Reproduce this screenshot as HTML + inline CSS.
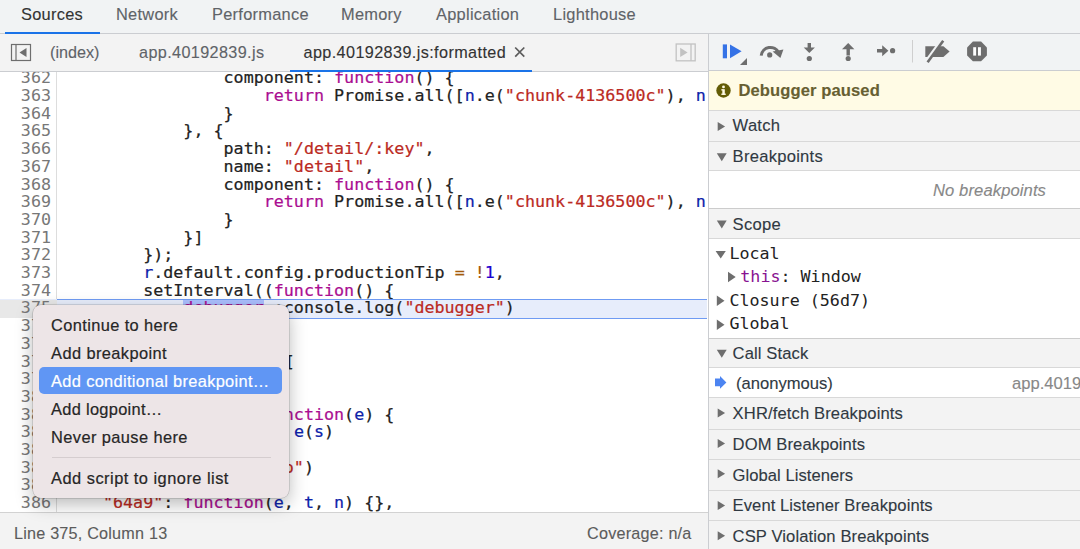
<!DOCTYPE html>
<html lang="en">
<head>
<meta charset="utf-8">
<title>DevTools - Sources</title>
<style>
*{box-sizing:border-box;margin:0;padding:0}
html,body{width:1080px;height:549px;overflow:hidden;background:#fff}
body{position:relative;font-family:"Liberation Sans",Arial,sans-serif;color:#333;font-size:16px;-webkit-font-smoothing:antialiased}
.abs{position:absolute}
#tabs span,#ftabs span,.row>span,#status span{-webkit-text-stroke:.12px}
/* top tab bar */
#tabs{left:0;top:0;width:1080px;height:34px;background:#f1f3f4;border-bottom:1px solid #cbcdd1}
#tabs span{position:absolute;top:4px;letter-spacing:.27px;font-size:16.4px;line-height:20px;color:#5f6368;white-space:nowrap}
#tabs span.sel{color:#333}
#tabs i{position:absolute;left:5px;top:32px;width:95px;height:2px;background:#1a73e8}
/* file tab bar */
#ftabs{left:0;top:34px;width:708px;height:38px;background:#f3f3f3;border-bottom:1px solid #cbcdd1}
#ftabs span{position:absolute;top:8px;font-size:16.2px;line-height:20px;color:#5f6368;white-space:nowrap}
#ftabs span.sel{color:#333}
#ftabs i{position:absolute;left:290px;top:35.5px;width:242px;height:2px;background:#1a73e8}
/* code */
#code{z-index:0;left:0;top:72px;width:708px;height:440px;overflow:hidden;background:#fff}
#gutter{left:0;top:0;width:57px;height:441px;border-right:1px solid #ddd;background:#fff}
.ln{position:absolute;left:0;width:706.5px;height:17.7px;font-family:"DejaVu Sans Mono","Liberation Mono",monospace;font-size:16.7px;line-height:17.7px;white-space:pre;color:#222}
.ln b{position:absolute;left:0;top:0;width:51px;text-align:right;font-weight:normal;color:#777}
.ln s{position:absolute;left:62.8px;top:0;text-decoration:none;-webkit-text-stroke:.22px}
.p{color:#881391}.ln.ex{background:#e7edfb;height:18.2px}
.ln.ex s{overflow:hidden;height:17.7px}
.ln.ex:before{content:"";z-index:2;position:absolute;left:57px;right:0;top:-.5px;height:1.3px;background:#6f9bf3}
.ln.ex:after{content:"";z-index:2;position:absolute;left:57px;right:0;bottom:-1.2px;height:1.3px;background:#6f9bf3}
.ln.ex b{width:57px;padding-right:6px}
.ln.ex i{position:absolute;left:0;top:.8px;width:57px;height:17.8px;background:#e8e8e8}
.tok{background:#abbffe}
.k{color:#aa0d91}.st{color:#bb2a23}.d{color:#0d22aa}.n{color:#1c00cf}.o{color:#a3590b}
/* status */
#status{left:0;top:512px;width:708px;height:37px;background:#f3f3f3;border-top:1px solid #d2d2d2;font-size:16.2px;color:#5c5c5c}
#status span{position:absolute;top:10px;line-height:20px;white-space:nowrap}
/* right */
#right{left:708px;top:34px;width:372px;height:515px;border-left:1px solid #cbcdd1;background:#fff}
#dbgbar{left:0;top:0;width:371px;height:36.5px;background:#f1f3f4;border-bottom:1px solid #cbcdd1}
.row{position:absolute;left:0;width:371px;background:#f3f3f3;border-bottom:1px solid #d8d8d8;font-size:16.6px;letter-spacing:.25px;color:#303942;white-space:nowrap}
.row>span{position:absolute;left:23.6px;line-height:20px}
.tri{position:absolute;width:0;height:0}
.tri.r{border-left:7.4px solid #6e6e6e;border-top:4.6px solid transparent;border-bottom:4.6px solid transparent;margin-top:-.3px}
.tri.r2{border-left:7.7px solid #6e6e6e;border-top:5.3px solid transparent;border-bottom:5.3px solid transparent}
.tri.dn{border-top:8px solid #6e6e6e;border-left:5px solid transparent;border-right:5px solid transparent}
.mono{font-family:"DejaVu Sans Mono","Liberation Mono",monospace;font-size:16.7px;color:#222;white-space:pre;position:absolute;line-height:20px}
/* menu */
#menu{z-index:10;left:32.5px;top:305px;width:256.5px;height:193px;background:#ede5e7;border-radius:8px;box-shadow:0 0 0 0.5px rgba(0,0,0,.22),0 6px 18px rgba(0,0,0,.28);font-size:16.4px;color:#262626}
#menu span{position:absolute;left:18.6px;line-height:20px;white-space:nowrap;-webkit-text-stroke:.2px}
#menu .hl{position:absolute;left:6.7px;top:61.6px;width:242.6px;height:27.4px;border-radius:5px;background:#6096f4}
#menu .sep{position:absolute;left:19px;top:152px;width:219px;height:1px;background:#d5cdcf}
</style>
</head>
<body>
<!-- top tabs -->
<div id="tabs" class="abs">
<span class="sel" style="left:21px">Sources</span>
<span style="left:116px">Network</span>
<span style="left:212px">Performance</span>
<span style="left:341px">Memory</span>
<span style="left:436px">Application</span>
<span style="left:553px">Lighthouse</span>
<i></i>
</div>
<!-- file tabs -->
<div id="ftabs" class="abs">
<svg class="abs" style="left:10px;top:9px" width="22" height="19" viewBox="0 0 22 19"><rect x="1.5" y="1.5" width="19" height="16" fill="none" stroke="#6e6e6e" stroke-width="1.2"/><line x1="6" y1="1.5" x2="6" y2="17.5" stroke="#6e6e6e" stroke-width="1.2"/><path d="M16.5 5 L16.5 14 L9.5 9.5 Z" fill="#6e6e6e"/></svg>
<span style="left:50px">(index)</span>
<span style="left:139px;letter-spacing:.38px">app.40192839.js</span>
<span class="sel" style="left:303.5px;letter-spacing:.4px">app.40192839.js:formatted</span>
<svg class="abs" style="left:513px;top:11px" width="14" height="14" viewBox="513 45 14 14" aria-label="×"><title>×</title><path d="M515.2 47.5 L524.3 56.7 M524.3 47.5 L515.2 56.7" stroke="#5c5c5c" stroke-width="1.7" fill="none"/></svg>
<svg class="abs" style="left:675px;top:9px" width="22" height="19" viewBox="0 0 22 19"><rect x="1.2" y="1" width="19" height="16.8" fill="none" stroke="#c2c2c2" stroke-width="1.3"/><line x1="16" y1="1" x2="16" y2="17.8" stroke="#c2c2c2" stroke-width="1.3"/><path d="M5.2 4.7 L5.2 14.1 L12.6 9.4 Z" fill="#c2c2c2"/></svg>
<i></i>
</div>
<!-- code -->
<div id="code" class="abs">
<div id="gutter" class="abs"></div>
<div id="lines" class="abs" style="left:0;top:-0.1px;width:708px;height:0">
<div class="ln" style="top:-2.55px"><b>362</b><s>                component: <span class="k">function</span>() {</s></div>
<div class="ln" style="top:15.15px"><b>363</b><s>                    <span class="k">return</span> Promise.all([<span class="d">n</span>.e(<span class="st">"chunk-4136500c"</span>), <span class="d">n</span>.e(<span class="st">"chunk-7f2a1b3e"</span>)])</s></div>
<div class="ln" style="top:32.85px"><b>364</b><s>                }</s></div>
<div class="ln" style="top:50.55px"><b>365</b><s>            }, {</s></div>
<div class="ln" style="top:68.25px"><b>366</b><s>                path: <span class="st">"/detail/:key"</span>,</s></div>
<div class="ln" style="top:85.95px"><b>367</b><s>                name: <span class="st">"detail"</span>,</s></div>
<div class="ln" style="top:103.65px"><b>368</b><s>                component: <span class="k">function</span>() {</s></div>
<div class="ln" style="top:121.35px"><b>369</b><s>                    <span class="k">return</span> Promise.all([<span class="d">n</span>.e(<span class="st">"chunk-4136500c"</span>), <span class="d">n</span>.e(<span class="st">"chunk-2d0c4a8f"</span>)])</s></div>
<div class="ln" style="top:139.05px"><b>370</b><s>                }</s></div>
<div class="ln" style="top:156.75px"><b>371</b><s>            }]</s></div>
<div class="ln" style="top:174.45px"><b>372</b><s>        });</s></div>
<div class="ln" style="top:192.15px"><b>373</b><s>        <span class="d">r</span>.default.config.productionTip <span class="o">=</span> <span class="o">!</span><span class="n">1</span>,</s></div>
<div class="ln" style="top:209.85px"><b>374</b><s>        setInterval((<span class="k">function</span>() {</s></div>
<div class="ln ex" style="top:227.55px"><i></i><b>375</b><s>            <span class="tok"><span class="k">debugger</span></span> ;console.log(<span class="st">"debugger"</span>)</s></div>
<div class="ln" style="top:245.25px"><b>376</b><s>        }), <span class="n">1e3</span>)</s></div>
<div class="ln" style="top:262.95px"><b>377</b><s>    },</s></div>
<div class="ln" style="top:280.65px"><b>378</b><s style="left:63.8px">            children: [</s></div>
<div class="ln" style="top:298.35px"><b>379</b><s>        <span class="d">e</span>.exports</s></div>
<div class="ln" style="top:316.05px"><b>380</b><s>    },</s></div>
<div class="ln" style="top:333.75px"><b>381</b><s>            change: <span class="k">function</span>(<span class="d">e</span>) {</s></div>
<div class="ln" style="top:351.45px"><b>382</b><s>                <span class="k">return</span> <span class="d">e</span>(<span class="d">s</span>)</s></div>
<div class="ln" style="top:369.15px"><b>383</b><s>            }</s></div>
<div class="ln" style="top:386.85px"><b>384</b><s>            }, <span class="st">"baz-foo"</span>)</s></div>
<div class="ln" style="top:404.55px"><b>385</b><s>    },</s></div>
<div class="ln" style="top:422.25px"><b>386</b><s>    <span class="st">"64a9"</span>: <span class="k">function</span>(<span class="d">e</span>, <span class="d">t</span>, <span class="d">n</span>) {},</s></div>
</div>
</div>
<!-- status -->
<div id="status" class="abs"><span style="left:14px;letter-spacing:.21px">Line 375, Column 13</span><span style="left:587px;letter-spacing:.22px">Coverage: n/a</span></div>
<!-- right -->
<div id="right" class="abs">
<div id="dbgbar" class="abs">
<svg class="abs" style="left:0;top:0" width="371" height="36" viewBox="709 34 371 36">
<!-- resume -->
<rect x="722.8" y="44.4" width="4.2" height="13.9" fill="#3572e6"/>
<path d="M730 44.4 L741.6 51.35 L730 58.3 Z" fill="#3572e6"/>
<path d="M747 58 L747 65 L740 65 Z" fill="#6e6e6e"/>
<!-- step over -->
<path d="M761.2 55.6 A9.2 9.2 0 0 1 778.6 52.6" fill="none" stroke="#6e6e6e" stroke-width="3"/>
<path d="M772.6 51.6 L783.4 49.4 L780.4 58 Z" fill="#6e6e6e"/>
<circle cx="769.7" cy="54.9" r="2.6" fill="#6e6e6e"/>
<!-- step into -->
<path d="M807.6 43 H811 V47.4 H814.9 L809.3 52.9 L803.7 47.4 H807.6 Z" fill="#6e6e6e"/>
<circle cx="809.3" cy="58.5" r="2.6" fill="#6e6e6e"/>
<!-- step out -->
<path d="M848.2 43 L854.4 49.3 H849.9 V55.6 H846.5 V49.3 H842 Z" fill="#6e6e6e"/>
<circle cx="848.2" cy="58.5" r="2.6" fill="#6e6e6e"/>
<!-- step -->
<path d="M877 48.9 H882.2 V45.2 L888.4 50.7 L882.2 56.2 V52.5 H877 Z" fill="#6e6e6e"/>
<circle cx="892.6" cy="50.7" r="2.6" fill="#6e6e6e"/>
<!-- divider -->
<rect x="912" y="40" width="1" height="22.5" fill="#cfcfcf"/>
<!-- deactivate breakpoints -->
<path d="M925.3 46.2 H943.4 L949.6 51.55 L943.4 56.9 H925.3 Z" fill="#6e6e6e"/>
<path d="M925.6 62.3 L941.2 40.8" stroke="#f1f3f4" stroke-width="3.4" fill="none"/>
<path d="M927.6 62.3 L943.2 40.8" stroke="#6e6e6e" stroke-width="2.6" fill="none"/>
<!-- pause on exceptions -->
<path d="M972.9 41.6 H981.1 L986.9 47.4 V55.4 L981.1 61.2 H972.9 L967.1 55.4 V47.4 Z" fill="#6e6e6e"/>
<rect x="973.2" y="47.2" width="2.9" height="8.4" fill="#fff"/>
<rect x="978" y="47.2" width="2.9" height="8.4" fill="#fff"/>
</svg>
</div>
<!-- Debugger paused -->
<div class="row" style="top:37px;height:40px;background:#fffbe5;color:#675f32;font-weight:bold">
<svg class="abs" style="left:7px;top:12px" width="15" height="15" viewBox="0 0 15 15"><circle cx="7.5" cy="7.5" r="7.2" fill="#635c06"/><rect x="6.3" y="6.2" width="2.5" height="5.6" fill="#fffbe5"/><rect x="5.3" y="6.2" width="2" height="1.3" fill="#fffbe5"/><rect x="5.3" y="10.6" width="4.5" height="1.3" fill="#fffbe5"/><circle cx="7.5" cy="3.9" r="1.4" fill="#fffbe5"/></svg>
<span style="left:29.5px;top:10px;letter-spacing:.08px">Debugger paused</span></div>
<!-- Watch -->
<div class="row" style="top:77px;height:31px"><span style="top:5px">Watch</span></div>
<!-- Breakpoints -->
<div class="row" style="top:108px;height:29px"><span style="top:5px">Breakpoints</span></div>
<div class="row" style="top:137px;height:37.5px;background:#fff;border-bottom-color:#ccc"><span style="left:224px;top:9.6px;font-style:italic;color:#888;letter-spacing:.1px">No breakpoints</span></div>
<!-- Scope -->
<div class="row" style="top:174.5px;height:30px"><span style="top:6px">Scope</span></div>
<div class="row" style="top:204.5px;height:100px;background:#fff;border-bottom-color:#ccc;letter-spacing:0">
<div class="mono" style="left:20.4px;top:4.3px">Local</div>
<div class="mono" style="left:31.3px;top:27px"><span class="p">this</span>: Window</div>
<div class="mono" style="left:20.4px;top:51.3px">Closure (56d7)</div>
<div class="mono" style="left:20.4px;top:74.6px">Global</div>
</div>
<!-- Call Stack -->
<div class="row" style="top:304.5px;height:29.5px;letter-spacing:.1px"><span style="top:5px">Call Stack</span></div>
<div class="row" style="top:334px;height:30px;background:#fff;letter-spacing:0">
<svg class="abs" style="left:6.3px;top:8.4px" width="12" height="13" viewBox="0 0 12 13"><path d="M0 2.6 H5 V0 L11.4 6.4 L5 12.8 V10.2 H0 Z" fill="#4c84f1"/></svg>
<span style="left:27px;top:6px">(anonymous)</span><span style="left:303px;top:6px;color:#888">app.40192839.js:formatted:375</span></div>
<div class="row" style="top:364px;height:32px;letter-spacing:.12px"><span style="top:5.6px">XHR/fetch Breakpoints</span></div>
<div class="row" style="top:396px;height:30px;letter-spacing:.1px"><span style="top:5px">DOM Breakpoints</span></div>
<div class="row" style="top:426px;height:31px;letter-spacing:.04px"><span style="top:5.6px">Global Listeners</span></div>
<div class="row" style="top:457px;height:30px;letter-spacing:.07px"><span style="top:5px">Event Listener Breakpoints</span></div>
<div class="row" style="top:487px;height:31px;letter-spacing:.1px"><span style="top:5.6px">CSP Violation Breakpoints</span></div>
<svg class="abs" style="left:0;top:0;pointer-events:none" width="371" height="515" viewBox="709 34 371 515" fill="#6e6e6e"><path d="M717.7 122.1 L725.1 126.6 L717.7 131.1 Z"/><path d="M716.8 153.2 L726.7 153.2 L721.8 161.2 Z"/><path d="M716.8 220.5 L726.7 220.5 L721.8 228.5 Z"/><path d="M716.8 349.7 L726.7 349.7 L721.8 357.7 Z"/><path d="M717.7 408.5 L725.1 413.0 L717.7 417.5 Z"/><path d="M717.7 438.9 L725.1 443.4 L717.7 447.9 Z"/><path d="M717.7 469.3 L725.1 473.8 L717.7 478.3 Z"/><path d="M717.7 501.1 L725.1 505.6 L717.7 510.1 Z"/><path d="M717.7 531.2 L725.1 535.7 L717.7 540.2 Z"/><path d="M715.6 251.0 L725.8 251.0 L720.7 258.6 Z"/><path d="M728.0 271.8 L735.7 277.0 L728.0 282.2 Z"/><path d="M716.8 295.6 L724.5 300.8 L716.8 306.0 Z"/><path d="M716.8 319.5 L724.5 324.7 L716.8 329.9 Z"/></svg>
</div>
<!-- context menu -->
<div id="menu" class="abs">
<div class="hl"></div>
<span style="top:10px;letter-spacing:.38px">Continue to here</span>
<span style="top:38px;letter-spacing:.4px">Add breakpoint</span>
<span style="top:66px;color:#fff;letter-spacing:.33px">Add conditional breakpoint…</span>
<span style="top:94px;letter-spacing:.3px">Add logpoint…</span>
<span style="top:122px;letter-spacing:.4px">Never pause here</span>
<div class="sep"></div>
<span style="top:163px;letter-spacing:.48px">Add script to ignore list</span>
</div>
</body>
</html>
